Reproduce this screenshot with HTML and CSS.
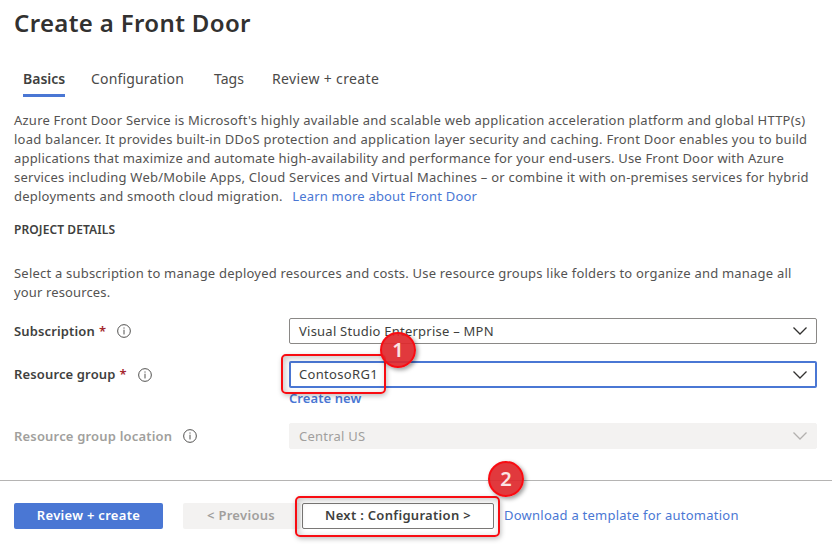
FILE: index.html
```html
<!DOCTYPE html>
<html lang="en">
<head>
<meta charset="utf-8">
<title>Create a Front Door</title>
<link rel="stylesheet" href="styles.css">
</head>
<body>
<main class="content">
  <h1 class="title"><span>Create a Front Door</span></h1>
  <nav class="tabs">
    <a class="tab tab-active"><span>Basics</span></a>
    <a class="tab tab-config"><span>Configuration</span></a>
    <a class="tab tab-tags"><span>Tags</span></a>
    <a class="tab tab-review"><span>Review + create</span></a>
  </nav>
  <p class="text intro">
    <span class="line l1">Azure Front Door Service is Microsoft's highly available and scalable web application acceleration platform and global HTTP(s)</span>
    <span class="line l2">load balancer. It provides built-in DDoS protection and application layer security and caching. Front Door enables you to build</span>
    <span class="line l3">applications that maximize and automate high-availability and performance for your end-users. Use Front Door with Azure</span>
    <span class="line l4">services including Web/Mobile Apps, Cloud Services and Virtual Machines – or combine it with on-premises services for hybrid</span>
    <span class="line l5">deployments and smooth cloud migration. <a class="link learn">Learn more about Front Door</a></span>
  </p>
  <h2 class="section"><span>PROJECT DETAILS</span></h2>
  <p class="text details">
    <span class="line l6">Select a subscription to manage deployed resources and costs. Use resource groups like folders to organize and manage all</span>
    <span class="line l7">your resources.</span>
  </p>
  <div class="row">
    <div class="label"><span class="name-sub">Subscription</span><span class="star">*</span><svg class="info" viewBox="0 0 13 13"><circle cx="6.5" cy="6.5" r="5.9"/><path d="M6.5 5.3V9.7M6.5 3.2V4.3"/></svg></div>
    <div class="select"><span class="value v1">Visual Studio Enterprise – MPN</span><svg class="chevron" viewBox="0 0 14 8"><path d="M.5 .5L7 7L13.5 .5"/></svg></div>
  </div>
  <div class="row row-group">
    <div class="label"><span class="name-group">Resource group</span><span class="star">*</span><svg class="info" viewBox="0 0 13 13"><circle cx="6.5" cy="6.5" r="5.9"/><path d="M6.5 5.3V9.7M6.5 3.2V4.3"/></svg></div>
    <div class="select focused"><span class="value v2">ContosoRG1</span><svg class="chevron" viewBox="0 0 14 8"><path d="M.5 .5L7 7L13.5 .5"/></svg>
      <div class="mark mark-group"></div><div class="badge badge-one">1</div>
    </div>
  </div>
  <a class="link create"><span>Create new</span></a>
  <div class="row row-location">
    <div class="label muted"><span class="name-loc">Resource group location</span><svg class="info" viewBox="0 0 13 13"><circle cx="6.5" cy="6.5" r="5.9"/><path d="M6.5 5.3V9.7M6.5 3.2V4.3"/></svg></div>
    <div class="select disabled"><span class="value v3">Central US</span><svg class="chevron" viewBox="0 0 14 8"><path d="M.5 .5L7 7L13.5 .5"/></svg></div>
  </div>
</main>
<footer class="footer">
  <div class="button primary"><span>Review + create</span></div>
  <div class="button previous"><span>&lt; Previous</span></div>
  <div class="button next"><span>Next : Configuration &gt;</span>
    <div class="mark mark-next"></div><div class="badge badge-two">2</div>
  </div>
  <a class="link download"><span>Download a template for automation</span></a>
</footer>
</body>
</html>
```
FILE: styles.css
```css
* { box-sizing: border-box; }
body {
  margin: 0;
  width: 832px;
  height: 550px;
  overflow: hidden;
  background: #fff;
  color: #403f3e;
  font: 13px/19px "Noto Sans", "Open Sans", sans-serif;
  white-space: nowrap;
}
h1, h2, p { margin: 0; }
.content { height: 480px; padding: 0 15px 0 14px; }
.title { height: 61px; padding-top: 7px; font-size: 24px; line-height: 32px; font-weight: 600; letter-spacing: .35px; color: #323130; }
.tabs { display: flex; height: 36px; padding-left: 9px; }
.tab { height: 36px; padding-top: 8px; font-size: 14px; line-height: 19px; color: #4b4a49; }
.tab-active { width: 42px; border-bottom: 3px solid #4a77d4; font-weight: 600; color: #403f3e; }
.tab-config { margin-left: 26px; width: 94px; letter-spacing: .17px; }
.tab-tags { margin-left: 29px; width: 30px; }
.tab-review { margin-left: 28px; letter-spacing: .35px; }
.text { color: #545352; }
.intro { margin-top: 14px; }
.line { display: block; height: 19px; }
.l1 { letter-spacing: .225px; }
.l2 { letter-spacing: .245px; }
.l3 { letter-spacing: .197px; }
.l4 { letter-spacing: .237px; }
.l5 { letter-spacing: .225px; }
.l6 { letter-spacing: .208px; }
.l7 { letter-spacing: .14px; }
.link { color: #4a77d4; }
.learn { margin-left: 6px; letter-spacing: .19px; }
.section { margin-top: 14px; height: 19px; font-size: 12px; font-weight: 600; letter-spacing: .1px; }
.details { margin-top: 25px; }
.row { display: flex; height: 26px; margin-top: 16px; }
.label { display: flex; align-items: center; width: 275px; font-weight: 600; letter-spacing: .15px; }
.star { margin-left: 4px; color: #a4262c; }
.info { width: 14px; height: 14px; margin-left: 10.5px; fill: none; stroke: #4b4a49; stroke-width: .9; }
.select { position: relative; display: flex; align-items: center; justify-content: space-between; width: 528px; height: 26px; padding: 0 9px; border: 1px solid #8a8886; border-radius: 2px; }
.value { letter-spacing: .24px; }
.v2 { letter-spacing: .32px; }
.chevron { width: 14px; height: 8px; fill: none; stroke: #323130; stroke-width: 1.3; overflow: visible; }
.row-group { margin-top: 17px; height: 27px; }
.name-sub, .name-group { letter-spacing: .14px; }
.name-loc { letter-spacing: .18px; }
.star + .info { margin-left: 11px; }
.focused { height: 27px; border: 2px solid #4a77d4; padding: 0 8px; }
.create { display: block; margin: 1px 0 0 275px; font-weight: 600; height: 19px; letter-spacing: .07px; }
.row-location { margin-top: 15px; }
.muted { color: #a19f9d; }
.disabled { color: #a19f9d; background: #f3f2f1; border-color: #f3f2f1; }
.disabled .chevron { stroke: #b3b1af; }
.footer { display: flex; height: 70px; padding: 22px 0 0 14px; border-top: 1px solid #b5b4b3; }
.button { position: relative; display: flex; justify-content: center; align-items: center; height: 26px; padding-bottom: 2px; border-radius: 2px; font-weight: 600; letter-spacing: .3px; }
.primary { width: 149px; background: #4a77d4; color: #fff; }
.previous { width: 118px; margin-left: 20px; padding-right: 2px; background: #f3f2f1; color: #a19f9d; }
.next { width: 192px; margin-left: 1px; border: 1px solid #7a7876; background: #fff; }
.download { margin: 3px 0 0 10px; letter-spacing: .24px; }
.mark { position: absolute; border: 2px solid #f80c12; border-radius: 5px; box-shadow: 1px 2px 5px rgba(0,0,0,.25), inset 2px 2px 7px rgba(0,0,0,.22); }
.mark-group { left: -10px; top: -9px; width: 105px; height: 40px; }
.mark-next { left: -8px; top: -8px; width: 205px; height: 41px; }
.badge { position: absolute; width: 36px; height: 36px; border: 2px solid #f80c12; border-radius: 50%; background: rgba(222,40,45,.92); box-shadow: 2px 2px 4px rgba(0,0,0,.4); color: #fbe4e4; font: 600 20px/31px "Noto Sans", sans-serif; letter-spacing: 0; text-align: center; }
.badge-one { left: 89px; top: -31px; }
.badge-two { left: 185px; top: -43px; }
```
